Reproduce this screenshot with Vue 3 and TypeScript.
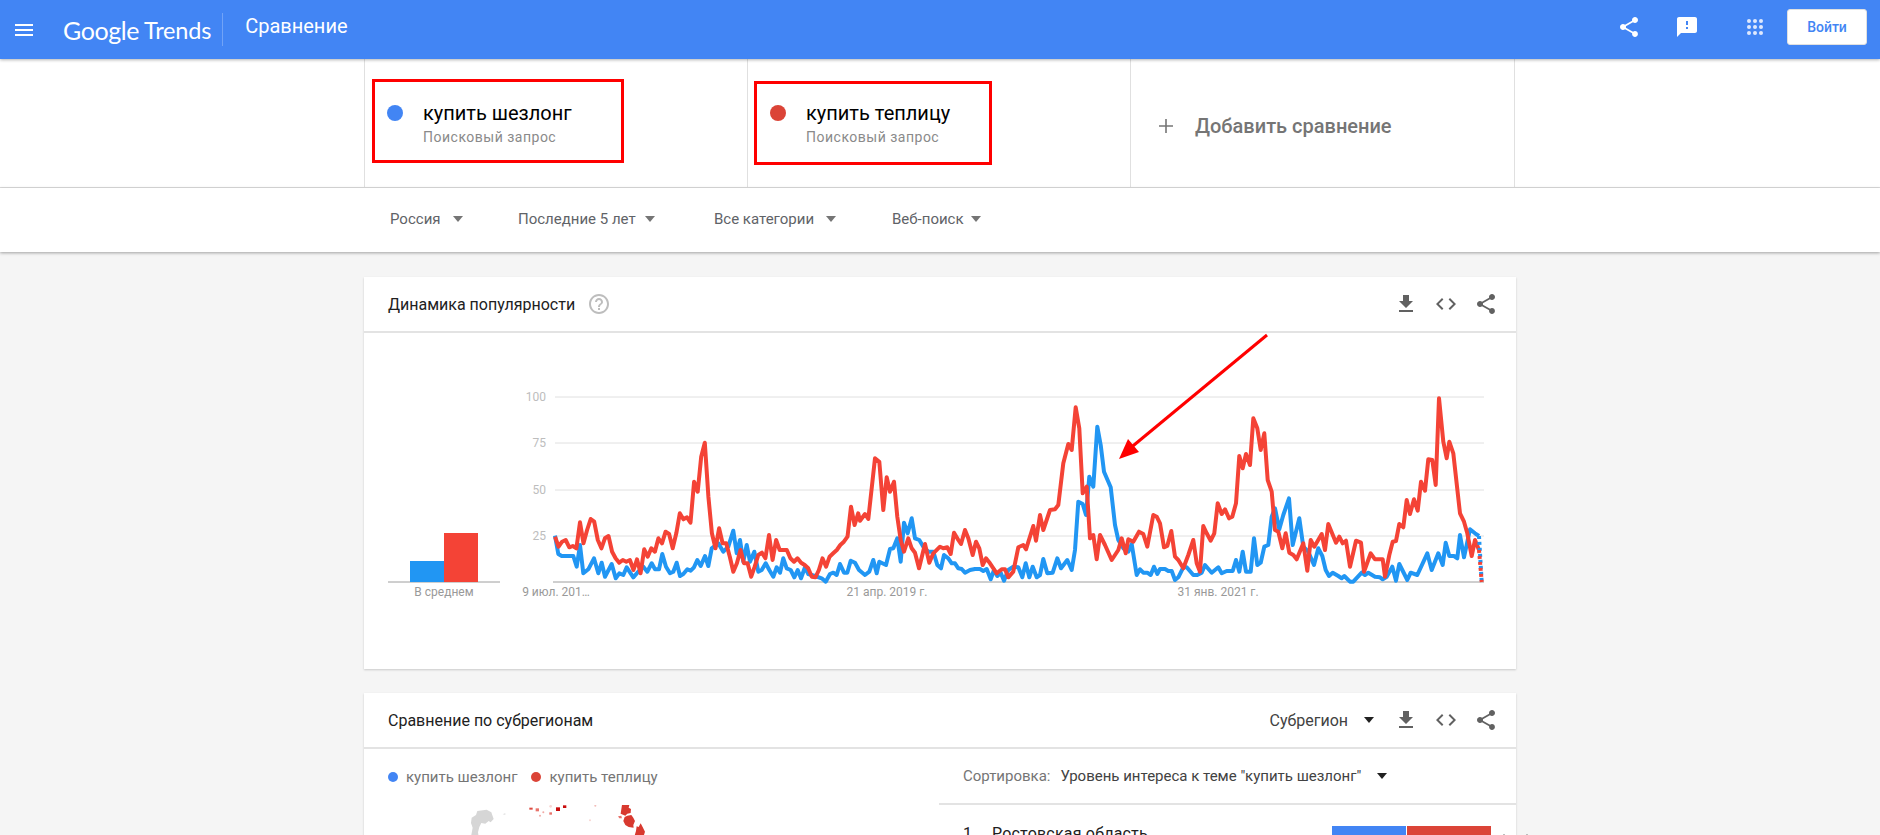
<template>
  <div class="page">
    <header class="topbar">
      <svg class="menu-icon" viewBox="0 0 24 24" width="24" height="24"><path d="M3 18h18v-2H3v2zm0-5h18v-2H3v2zm0-7v2h18V6H3z" /></svg>
      <div class="logo"><span class="logo-g">Google</span> <span class="logo-t">Trends</span></div>
      <div class="topbar-title">Сравнение</div>
      <div class="topbar-right">
        <svg class="top-icon share" viewBox="0 0 24 24" width="24" height="24"><path :d="icons.share" /></svg>
        <svg class="top-icon feedback" viewBox="0 0 24 24" width="24" height="24"><path :d="icons.feedback" /></svg>
        <svg class="top-icon apps" viewBox="0 0 24 24" width="24" height="24">
          <g v-for="y in [6, 12, 18]" :key="y">
            <circle v-for="x in [6, 12, 18]" :key="x" :cx="x" :cy="y" r="2" />
          </g>
        </svg>
        <button class="login">Войти</button>
      </div>
    </header>

    <section class="terms">
      <div class="terms-inner">
        <div v-for="t in terms" :key="t.name" class="term">
          <span class="term-dot" :style="{ background: t.color }"></span>
          <div>
            <div class="term-name">{{ t.name }}</div>
            <div class="term-sub">Поисковый запрос</div>
          </div>
          <span class="mark" :class="t.mark"></span>
        </div>
        <div class="term add">
          <svg class="plus" viewBox="0 0 16 16" width="16" height="16"><path d="M7.2 1h1.6v6.2H15v1.6H8.8V15H7.2V8.8H1V7.2h6.2z" /></svg>
          <span>Добавить сравнение</span>
        </div>
      </div>
    </section>

    <section class="filters">
      <div class="filters-inner">
        <div v-for="f in filters" :key="f.label" class="filter" :style="{ width: f.width + 'px', gap: f.gap + 'px' }">
          <span>{{ f.label }}</span>
          <i class="caret"></i>
        </div>
      </div>
    </section>

    <main class="content">
      <div class="card chart-card">
        <div class="card-head">
          <span class="card-title">Динамика популярности</span>
          <svg class="help" viewBox="0 0 24 24" width="24" height="24"><path :d="icons.help" /></svg>
          <div class="card-tools">
            <svg viewBox="0 0 24 24" width="24" height="24"><path :d="icons.download" /></svg>
            <svg viewBox="0 0 24 24" width="24" height="24"><path :d="icons.code" /></svg>
            <svg viewBox="0 0 24 24" width="24" height="24"><path :d="icons.share" /></svg>
          </div>
        </div>
        <svg class="chart" viewBox="0 0 1152 336" width="1152" height="336">
          <g v-for="g in grid" :key="g.label">
            <line x1="191" x2="1120" :y1="g.y" :y2="g.y" class="grid-line" />
            <text x="182" :y="g.y + 4" text-anchor="end" class="tick">{{ g.label }}</text>
          </g>
          <line x1="189" x2="1120" y1="249" y2="249" class="axis" />
          <line x1="24" x2="136" y1="249" y2="249" class="axis" />
          <rect x="46" y="228" width="34" height="21" fill="#2196f3" />
          <rect x="80" y="200" width="34" height="49" fill="#f44336" />
          <text x="80" y="263" text-anchor="middle" class="date">В среднем</text>
          <text x="192" y="263" text-anchor="middle" class="date">9 июл. 201…</text>
          <text x="523" y="263" text-anchor="middle" class="date">21 апр. 2019 г.</text>
          <text x="854" y="263" text-anchor="middle" class="date">31 янв. 2021 г.</text>
          <polyline :points="bluePoints" class="series" stroke="#2196f3" />
          <polyline :points="redPoints" class="series" stroke="#f44336" />
          <polyline :points="blueTail" class="series tail" stroke="#2196f3" />
          <polyline :points="redTail" class="series tail" stroke="#f44336" />
        </svg>
        <svg class="arrow" viewBox="0 0 160 135" width="160" height="135">
          <line x1="155" y1="3" x2="16" y2="118" stroke="#ff0000" stroke-width="3" />
          <polygon points="7,127 16,107 27,120" fill="#ff0000" />
        </svg>
      </div>

      <div class="card region-card">
        <div class="card-head">
          <span class="card-title">Сравнение по субрегионам</span>
          <div class="card-tools">
            <span class="region-select">Субрегион <i class="caret dark"></i></span>
            <svg viewBox="0 0 24 24" width="24" height="24"><path :d="icons.download" /></svg>
            <svg viewBox="0 0 24 24" width="24" height="24"><path :d="icons.code" /></svg>
            <svg viewBox="0 0 24 24" width="24" height="24"><path :d="icons.share" /></svg>
          </div>
        </div>
        <div class="region-body">
          <div class="region-left">
            <div class="legend">
              <span v-for="t in terms" :key="t.name" class="legend-item">
                <span class="legend-dot" :style="{ background: t.color }"></span>{{ t.name }}
              </span>
            </div>
            <svg class="map" viewBox="0 0 575 30" width="575" height="30">
              <g transform="translate(56,-10) scale(0.3333)">
                <polygon points="155,68 168,60 172,48 200,44 214,52 221,72 212,82 206,78 196,86 184,84 178,96 174,112 176,125 153,125 158,98 153,84" fill="#d6d6d6" />
                <polygon points="248,58 256,54 256,60" fill="#e2e2e2" />
                <polygon points="606,30 628,30 626,38 633,42 632,54 622,56 616,62 602,56" fill="#d8392f" />
                <polygon points="594,64 604,62 606,70 598,70" fill="#e8736b" />
                <polygon points="614,66 622,62 634,60 640,68 645,78 640,90 641,98 626,96 616,90 610,78" fill="#d8392f" />
                <polygon points="650,94 656,96 662,85 668,96 675,110 672,120 678,125 643,125 648,108" fill="#d8392f" />
                <rect x="408" y="37" width="12" height="11" fill="#c80d0d" />
                <rect x="429" y="31" width="10" height="8" fill="#c80d0d" />
                <rect x="328" y="38" width="10" height="6" fill="#dd4a40" />
                <rect x="347" y="40" width="10" height="9" fill="#e8736b" />
                <rect x="388" y="52" width="8" height="7" fill="#e8736b" />
                <circle cx="360" cy="62" r="3" fill="#f2aaa5" />
                <circle cx="370" cy="52" r="3" fill="#f2aaa5" />
                <circle cx="392" cy="34" r="4" fill="#f8d6d3" />
                <circle cx="526" cy="32" r="3" fill="#f2bdb9" />
                <circle cx="510" cy="76" r="3" fill="#f8d6d3" />
              </g>
            </svg>
          </div>
          <div class="region-right">
            <div class="sort">
              <span class="sort-label">Сортировка:</span>
              <span class="sort-value">Уровень интереса к теме "купить шезлонг"</span>
              <i class="caret dark"></i>
            </div>
            <div class="row">
              <span class="row-num">1</span>
              <span class="row-name">Ростовская область</span>
              <span class="row-bar">
                <span class="bar-blue"></span>
                <span class="bar-red"></span>
              </span>
              <span class="row-tick first"></span>
              <span class="row-tick second"></span>
            </div>
          </div>
        </div>
      </div>
    </main>
  </div>
</template>

<script setup lang="ts">
import { computed } from "vue";

// page offset of the chart svg, everything below is traced from 3x crops
const CHART_X = 364;
const CHART_Y = 333;

type Pt = [number, number];

const icons = {
  share:
    "M18 16.08c-.76 0-1.44.3-1.96.77L8.91 12.7c.05-.23.09-.46.09-.7s-.04-.47-.09-.7l7.05-4.11c.54.5 1.25.81 2.04.81 1.66 0 3-1.34 3-3s-1.34-3-3-3-3 1.34-3 3c0 .24.04.47.09.7L8.04 9.81C7.5 9.31 6.79 9 6 9c-1.66 0-3 1.34-3 3s1.34 3 3 3c.79 0 1.5-.31 2.04-.81l7.12 4.16c-.05.21-.08.43-.08.65 0 1.61 1.31 2.92 2.92 2.92 1.61 0 2.92-1.31 2.92-2.92s-1.31-2.92-2.92-2.92z",
  feedback:
    "M20 2H4c-1.1 0-1.99.9-1.99 2L2 22l4-4h14c1.1 0 2-.9 2-2V4c0-1.1-.9-2-2-2zm-7 12h-2v-2h2v2zm0-4h-2V6h2v4z",
  download: "M19 9h-4V3H9v6H5l7 7 7-7zM5 18v2h14v-2H5z",
  code: "M9.4 16.6L4.8 12l4.6-4.6L8 6l-6 6 6 6 1.4-1.4zm5.2 0l4.6-4.6-4.6-4.6L16 6l6 6-6 6-1.4-1.4z",
  help: "M11 18h2v-2h-2v2zm1-16C6.48 2 2 6.48 2 12s4.48 10 10 10 10-4.48 10-10S17.52 2 12 2zm0 18c-4.41 0-8-3.59-8-8s3.59-8 8-8 8 3.59 8 8-3.59 8-8 8zm0-14c-2.21 0-4 1.79-4 4h2c0-1.1.9-2 2-2s2 .9 2 2c0 2-3 1.75-3 5h2c0-2.25 3-2.5 3-5 0-2.21-1.79-4-4-4z",
};

const terms = [
  { name: "купить шезлонг", color: "#4285f4", mark: "mark-a" },
  { name: "купить теплицу", color: "#db4437", mark: "mark-b" },
];

const filters = [
  { label: "Россия", width: 128, gap: 12 },
  { label: "Последние 5 лет", width: 196, gap: 9 },
  { label: "Все категории", width: 178, gap: 12 },
  { label: "Веб-поиск", width: 110, gap: 7 },
];

const grid = [
  { label: "100", y: 64 },
  { label: "75", y: 110 },
  { label: "50", y: 157 },
  { label: "25", y: 203 },
];

const redA = [
  500, 530, 515, 510, 532, 528, 535, 457, 520, 480, 447, 455, 510, 535, 505, 498, 545, 565, 578, 570, 575, 570, 600,
  568, 610, 538, 560, 535, 545, 505, 520, 485, 492, 535, 490, 430, 448, 442, 458, 335, 365, 260, 218, 380, 490, 535,
  475, 520, 520, 560, 605, 580, 540, 580, 580, 620, 590, 555, 548, 565, 495, 570, 510, 540, 540, 540, 565, 575, 565,
  578, 585, 595, 620, 622, 600, 565, 590, 560, 550, 540, 525, 515, 500, 410, 465, 430,
];

const redB: Pt[] = [
  [0, 452], [15, 432], [25, 447], [45, 265], [58, 275], [70, 420], [80, 322], [90, 365], [102, 335], [112, 440],
  [122, 510], [132, 545], [145, 505], [155, 535], [165, 548], [177, 595], [195, 522], [208, 578], [220, 550],
  [240, 530], [250, 535], [262, 532], [272, 552], [282, 488], [295, 510], [303, 522], [315, 480], [325, 505],
  [338, 555], [348, 515], [358, 535], [368, 585], [378, 565], [390, 580], [410, 610], [425, 598], [435, 598],
  [445, 622], [460, 605], [475, 532], [490, 525], [498, 538], [520, 468], [528, 512], [540, 435], [550, 480],
  [570, 420], [585, 418], [595, 405], [610, 280], [625, 222], [635, 240], [647, 112], [658, 175], [668, 370],
  [680, 350], [690, 505], [700, 495], [710, 568], [720, 495], [735, 525], [755, 570], [775, 540], [785, 505],
  [797, 550], [805, 508], [820, 515], [837, 485], [850, 492], [862, 530], [880, 435], [890, 440],
];

const redC: Pt[] = [
  [0, 460], [12, 532], [22, 528], [34, 483], [45, 560], [55, 570], [70, 595], [85, 555], [100, 510], [110, 580],
  [120, 605], [130, 468], [140, 490], [152, 512], [163, 490], [173, 400], [185, 432], [195, 418], [207, 445],
  [217, 440], [228, 400], [238, 258], [248, 295], [258, 252], [270, 285], [280, 145], [292, 175], [302, 240],
  [313, 190], [323, 330], [335, 365], [345, 480], [355, 485], [367, 535], [377, 490], [388, 548], [400, 555],
  [410, 568], [430, 520], [442, 602], [452, 510], [463, 530], [485, 492], [495, 540], [505, 462], [528, 518],
  [538, 500], [548, 520], [558, 512], [570, 590], [588, 512], [603, 518], [612, 605], [632, 550], [645, 568],
  [668, 568], [675, 620], [688, 555], [698, 515], [708, 513], [718, 462], [730, 472], [740, 390], [750, 432],
  [762, 388], [773, 422], [783, 335], [795, 362], [805, 268], [817, 270], [827, 345], [837, 85], [850, 215],
  [860, 265], [868, 215], [880, 250], [900, 430], [912, 455], [922, 490], [935, 558], [945, 510], [957, 540],
];

const blueA: Pt[] = [
  [585, 497], [595, 552], [605, 558], [640, 558], [650, 590], [660, 525], [670, 610], [685, 598], [702, 565],
  [715, 610], [725, 578], [735, 620], [755, 582], [767, 625], [778, 610], [790, 615], [800, 592], [820, 622],
  [835, 605], [850, 590], [862, 605], [875, 580], [885, 598], [897, 598], [907, 552], [918, 590], [930, 610],
  [940, 605], [950, 578], [960, 618], [970, 612], [982, 598], [992, 602], [1002, 592], [1012, 570], [1022, 588],
  [1035, 558], [1045, 588], [1055, 535], [1075, 520], [1090, 545], [1105, 530], [1120, 482], [1130, 550],
  [1140, 510], [1150, 575], [1160, 525], [1170, 575], [1183, 545], [1195, 605], [1205, 600], [1217, 580],
  [1228, 600], [1240, 620], [1250, 592], [1260, 608], [1270, 565], [1280, 595], [1292, 600], [1303, 622],
  [1313, 600], [1323, 625], [1335, 592], [1345, 612], [1365, 618], [1385, 625], [1397, 635], [1410, 612],
  [1420, 608], [1430, 615], [1440, 582], [1452, 608], [1462, 608], [1472, 572], [1485, 578], [1497, 600],
];

const blueB: Pt[] = [
  [15, 615], [28, 605], [40, 570], [50, 610], [58, 575], [78, 585], [90, 537], [100, 535], [112, 505], [122, 575],
  [132, 458], [143, 490], [155, 445], [165, 505], [178, 510], [190, 530], [205, 545], [220, 545], [232, 585],
  [243, 595], [252, 555], [265, 565], [275, 580], [285, 580], [295, 595], [305, 597], [315, 608], [330, 600],
  [345, 597], [360, 597], [370, 603], [380, 597], [392, 628], [402, 600], [412, 618], [422, 608], [432, 632],
  [445, 600], [460, 590], [475, 592], [487, 622], [497, 580], [508, 622], [518, 590], [530, 622], [540, 615],
  [550, 567], [562, 610], [578, 608], [592, 565], [603, 595], [622, 570], [635, 600], [645, 540], [655, 395],
  [668, 402], [678, 435], [688, 320], [700, 350], [712, 170], [722, 225], [732, 305], [752, 352], [765, 465],
  [775, 510], [790, 535], [805, 545], [815, 522], [830, 615], [840, 598], [850, 608], [862, 608], [872, 615],
  [882, 590], [892, 612],
];

const blueC: Pt[] = [
  [0, 597], [15, 597], [25, 603], [35, 603], [45, 630], [55, 622], [70, 592], [80, 592], [100, 615], [112, 615],
  [125, 608], [135, 585], [155, 608], [175, 592], [185, 610], [200, 603], [218, 603], [228, 570], [238, 605],
  [248, 545], [258, 605], [272, 605], [282, 505], [292, 585], [302, 578], [313, 530], [325, 525], [335, 440],
  [345, 415], [358, 478], [370, 435], [387, 385], [398, 525], [418, 445], [430, 530], [445, 545], [462, 585],
  [475, 535], [487, 558], [497, 600], [507, 618], [518, 608], [535, 618], [545, 625], [553, 618], [570, 635],
  [580, 635], [605, 608], [615, 615], [625, 608], [645, 620], [660, 622], [668, 628], [680, 620], [697, 590],
  [708, 632], [718, 582], [742, 630], [752, 608], [772, 615], [802, 550], [815, 600], [835, 550], [848, 585],
  [857, 518], [868, 558], [882, 558], [892, 565], [900, 495], [912, 562], [930, 478], [945, 490], [957, 498],
];

// crop coordinates (3x) back to chart coordinates
const toChart = (originX: number, pts: Pt[]) =>
  pts.map(([x, y]) => `${(originX + x / 3 - CHART_X).toFixed(1)},${(370 + y / 3 - CHART_Y).toFixed(1)}`);

const redPoints = computed(() =>
  [
    ...toChart(360, redA.map((y, i): Pt => [585 + 10.7 * i, y])),
    ...toChart(860, redB),
    ...toChart(1160, redC),
  ].join(" ")
);

const bluePoints = computed(() =>
  [...toChart(360, blueA), ...toChart(860, blueB), ...toChart(1160, blueC)].join(" ")
);

const redTail = computed(() => toChart(1160, [[957, 540], [965, 636]]).join(" "));
const blueTail = computed(() => toChart(1160, [[957, 498], [965, 636]]).join(" "));
</script>

<style>
html,
body {
  margin: 0;
  overflow: hidden;
  background: #f5f5f5;
}
</style>

<style scoped>
.page {
  font-family: Roboto, "Noto Sans", sans-serif;
  height: 835px;
  overflow: hidden;
  background: #f5f5f5;
  color: #212121;
}

.topbar {
  align-items: center;
  background: #4285f4;
  box-shadow: 0 1px 3px rgba(0, 0, 0, 0.3);
  color: #fff;
  display: flex;
  height: 59px;
  padding-left: 12px;
  position: relative;
  z-index: 2;
}

.menu-icon {
  fill: #fff;
}

.logo {
  border-right: 1px solid rgba(255, 255, 255, 0.25);
  display: flex;
  align-items: center;
  gap: 5px;
  height: 33px;
  margin-left: 27px;
  padding-right: 11px;
  white-space: nowrap;
}

.logo-g {
  font-family: Lato, sans-serif;
  font-size: 25px;
  letter-spacing: -0.4px;
}

.logo-t {
  font-family: Lato, sans-serif;
  font-size: 23.5px;
  letter-spacing: -0.2px;
}

.topbar-title {
  font-size: 20px;
  margin-left: 22px;
  margin-top: -8px;
}

.topbar-right {
  align-items: center;
  display: flex;
  margin-left: auto;
}

.top-icon {
  fill: #fff;
  margin-top: -6px;
}

.feedback {
  margin-left: 34px;
}

.apps {
  margin-left: 44px;
}

.apps circle {
  fill: #dfe9fd;
}

.login {
  background: #fff;
  border: 1px solid #e0e0e0;
  border-radius: 3px;
  color: #4285f4;
  font-family: inherit;
  font-size: 14px;
  font-weight: 500;
  height: 36px;
  margin-left: 20px;
  margin-right: 13px;
  margin-top: -5px;
  width: 80px;
}

.terms {
  background: #fff;
  border-bottom: 1px solid #ddd;
}

.terms-inner {
  border-right: 1px solid #e0e0e0;
  display: flex;
  height: 128px;
  margin-left: 364px;
  width: 1150px;
}

.term {
  align-items: flex-start;
  border-left: 1px solid #e0e0e0;
  box-sizing: border-box;
  display: flex;
  padding: 41px 0 0 22px;
  position: relative;
  width: 383px;
}

.term-dot {
  border-radius: 50%;
  flex: none;
  height: 16px;
  margin-right: 20px;
  margin-top: 5px;
  width: 16px;
}

.term-name {
  color: #000;
  font-size: 20px;
  line-height: 26px;
}

.term-sub {
  color: #8a8a8a;
  font-size: 14px;
  letter-spacing: 0.5px;
  line-height: 20px;
  margin-top: 1px;
}

.mark {
  border: 3px solid #ff0000;
  box-sizing: border-box;
  position: absolute;
}

.mark-a {
  height: 84px;
  left: 7px;
  top: 20px;
  width: 252px;
}

.mark-b {
  height: 84px;
  left: 6px;
  top: 22px;
  width: 238px;
}

.add {
  align-items: center;
  color: #757575;
  font-size: 20px;
  font-weight: 500;
  padding: 6px 0 0 27px;
}

.plus {
  fill: #757575;
  margin-right: 21px;
}

.filters {
  background: #fff;
  box-shadow: 0 1px 3px rgba(0, 0, 0, 0.35);
  height: 64px;
  position: relative;
}

.filters-inner {
  align-items: center;
  display: flex;
  height: 62px;
  margin-left: 390px;
}

.filter {
  align-items: center;
  color: #5f6368;
  display: flex;
  font-size: 15px;
}

.caret {
  border-left: 5.5px solid transparent;
  border-right: 5.5px solid transparent;
  border-top: 6px solid #757575;
  display: inline-block;
}

.caret.dark {
  border-top-color: #212121;
}

.content {
  padding-top: 25px;
}

.card {
  background: #fff;
  box-shadow: 0 1px 2px rgba(0, 0, 0, 0.18);
  margin: 0 auto 24px;
  position: relative;
  width: 1152px;
}

.card-head {
  align-items: center;
  border-bottom: 2px solid #e3e3e3;
  box-sizing: border-box;
  display: flex;
  height: 56px;
  padding: 0 18px 0 24px;
}

.card-title {
  font-size: 16px;
  color: #212121;
}

.help {
  fill: #bdbdbd;
  margin-left: 12px;
}

.card-tools {
  align-items: center;
  display: flex;
  gap: 16px;
  margin-left: auto;
}

.card-tools svg {
  fill: #616161;
}

.chart {
  display: block;
}

.grid-line {
  stroke: #e0e0e0;
  stroke-width: 1;
}

.axis {
  stroke: #9e9e9e;
  stroke-width: 1;
}

.tick {
  fill: #bdbdbd;
  font-size: 12px;
}

.date {
  fill: #999;
  font-size: 12px;
}

.series {
  fill: none;
  stroke-linejoin: round;
  stroke-width: 4;
}

.tail {
  stroke-dasharray: 3 3;
}

.arrow {
  position: absolute;
  left: 748px;
  top: 55px;
}

.region-select {
  align-items: center;
  color: #424242;
  display: flex;
  font-size: 16px;
  gap: 16px;
  margin-right: 4px;
}

.region-body {
  display: flex;
}

.region-left {
  width: 575px;
}

.legend {
  align-items: center;
  color: #757575;
  display: flex;
  font-size: 15px;
  gap: 14px;
  height: 56px;
  padding-left: 24px;
}

.legend-item {
  align-items: center;
  display: flex;
}

.legend-dot {
  border-radius: 50%;
  height: 10px;
  margin-right: 8px;
  width: 10px;
}

.map {
  display: block;
}

.region-right {
  flex: 1;
}

.sort {
  align-items: center;
  border-bottom: 2px solid #e3e3e3;
  box-sizing: border-box;
  display: flex;
  font-size: 15px;
  height: 56px;
  padding-left: 24px;
}

.sort-label {
  color: #757575;
  margin-right: 10px;
}

.sort-value {
  color: #424242;
  margin-right: 16px;
}

.row {
  align-items: flex-start;
  color: #212121;
  display: flex;
  font-size: 16px;
  height: 60px;
  letter-spacing: 0.2px;
  padding: 19px 0 0 24px;
  position: relative;
}

.row-num {
  width: 29px;
}

.row-bar {
  display: flex;
  gap: 1px;
  height: 24px;
  left: 393px;
  position: absolute;
  top: 21px;
}

.bar-blue {
  background: #4285f4;
  width: 74px;
}

.bar-red {
  background: #db4437;
  width: 84px;
}

.row-tick {
  background: #bdbdbd;
  height: 1px;
  position: absolute;
  top: 29px;
  width: 2px;
}

.row-tick.first {
  left: 564px;
}

.row-tick.second {
  left: 587px;
}
</style>
